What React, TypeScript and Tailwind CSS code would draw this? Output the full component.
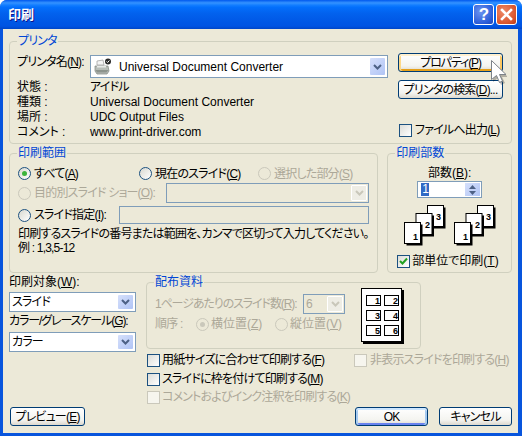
import type { ReactNode } from "react";

const ink = "text-[#000000]";
const off = "text-[#ACA899]";

function Group({ title, className, kana, children }: { title: string; className: string; kana?: boolean; children: ReactNode }) {
  return (
    <fieldset className={`rounded-[4px] border border-[#D0D0BF] ${className}`}>
      <legend className={`ml-[7px] px-[1px] h-[14px] leading-[14px] text-[#0046D5] ${kana ? "" : "tracking-normal"}`}>{title}</legend>
      {children}
    </fieldset>
  );
}

function Button({ children, className, tone }: { children: ReactNode; className: string; tone?: "hot" | "default" }) {
  const inner =
    tone === "hot"
      ? "shadow-[inset_0_2px_0_#FFF0CF,inset_2px_0_0_#FDD889,inset_-2px_0_0_#FBC761,inset_0_-2px_0_#E5A01A]"
      : tone === "default"
        ? "shadow-[inset_0_2px_0_#CEE7FF,inset_2px_0_0_#A6CAF0,inset_-2px_0_0_#A6CAF0,inset_0_-2px_0_#6982EE]"
        : "";
  return (
    <div
      className={`flex items-center justify-center rounded-[3px] border border-[#003C74] bg-[linear-gradient(180deg,#FFFFFF_0%,#F4F4F0_70%,#DCD8CE_100%)] text-black ${inner} ${className}`}
    >
      {children}
    </div>
  );
}

function Check({ on, disabled }: { on?: boolean; disabled?: boolean }) {
  return (
    <span
      className={`flex h-[13px] w-[13px] shrink-0 items-center justify-center border ${
        disabled
          ? "border-[#CAC8BB] bg-[#F6F5EE]"
          : "border-[#1C5180] bg-[linear-gradient(135deg,#DCDCD7_0%,#FFFFFF_100%)]"
      }`}
    >
      {on && (
        <svg width="9" height="9" viewBox="0 0 9 9">
          <path d="M1 4l2.500 2.500L8 1.500" fill="none" stroke="#21A121" strokeWidth="2" />
        </svg>
      )}
    </span>
  );
}

function Radio({ on, disabled }: { on?: boolean; disabled?: boolean }) {
  return (
    <span
      className={`flex h-[13px] w-[13px] shrink-0 items-center justify-center rounded-full border ${
        disabled
          ? "border-[#CAC8BB] bg-[#ECE9D8]"
          : "border-[#1C5180] bg-[linear-gradient(135deg,#D8D8D0_0%,#FFFFFF_100%)]"
      }`}
    >
      {on && <span className={`h-[5px] w-[5px] rounded-full ${disabled ? "bg-[#CAC8BB]" : "bg-[#3CB43C]"}`} />}
    </span>
  );
}

function Arrow({ disabled }: { disabled?: boolean }) {
  return (
    <span
      className={`flex items-center justify-center self-stretch rounded-[1px] ${
        disabled
          ? "m-[1px] w-[16px] border border-[#FFFFFF] bg-[#EEEDE5]"
          : "m-[2px] w-[15px] bg-[linear-gradient(135deg,#D6E0FB_0%,#B0C4F5_100%)]"
      }`}
    >
      <svg width="9" height="6" viewBox="0 0 9 6">
        <path d="M1 1l3.500 3.500L8 1" fill="none" stroke={disabled ? "#C9C7BA" : "#4D6185"} strokeWidth="2" />
      </svg>
    </span>
  );
}

function Combo({ children, className, disabled }: { children?: ReactNode; className: string; disabled?: boolean }) {
  return (
    <div className={`flex items-stretch border border-[#7F9DB9] ${disabled ? "bg-[#ECE9D8]" : "bg-white"} ${className}`}>
      <div className="flex min-w-0 flex-1 items-center pl-[2px]">{children}</div>
      <Arrow disabled={disabled} />
    </div>
  );
}

function PrinterIcon() {
  return (
    <svg width="17" height="18" viewBox="0 0 17 18" className="shrink-0">
      <path d="M3 3l6-1 1 5H3z" fill="#F4F4F4" stroke="#9A9A9A" strokeWidth="0.7" />
      <path d="M1 8h13l1 5-2 3H3l-2-3z" fill="#B8BDB8" stroke="#7E857E" strokeWidth="0.7" />
      <path d="M1.500 12h13l-2 2.500h-9.500z" fill="#8D948D" />
      <path d="M3 8h9v1.500H3z" fill="#E8EAE8" />
      <circle cx="14" cy="3.500" r="3" fill="#2B2B2B" />
      <path d="M12.600 3.500l1 1 1.800-2" fill="none" stroke="#FFFFFF" strokeWidth="1" />
    </svg>
  );
}

function PageStack() {
  const pages = [
    { x: 23.5, y: 0.5, n: "3", tx: 32, ty: 15 },
    { x: 12, y: 8.5, n: "2", tx: 21, ty: 23 },
    { x: 0.5, y: 17.5, n: "1", tx: 9, ty: 35 },
  ];
  return (
    <svg width="42" height="41" viewBox="0 0 42 41" className="shrink-0">
      {pages.map((p) => (
        <g key={p.n}>
          <rect x={p.x + 2} y={p.y + 2} width="16" height="21" fill="#000" />
          <rect x={p.x} y={p.y} width="16" height="21" fill="#fff" stroke="#000" />
          <text x={p.tx} y={p.ty} fontSize="9" fontWeight="700" fontFamily="Liberation Sans" letterSpacing="0" fill="#000">
            {p.n}
          </text>
        </g>
      ))}
    </svg>
  );
}

function HandoutIcon() {
  const cells = [
    [5.5, 7.5, "1"],
    [23.5, 7.5, "2"],
    [5.5, 22.5, "3"],
    [23.5, 22.5, "4"],
    [5.5, 37.5, "5"],
    [23.5, 37.5, "6"],
  ] as const;
  return (
    <svg width="44" height="57" viewBox="0 0 44 57" className="shrink-0">
      <rect x="2" y="2" width="41" height="54" fill="#000" />
      <rect x="0.5" y="0.5" width="40" height="53" fill="#fff" stroke="#000" />
      {cells.map(([x, y, n]) => (
        <g key={n}>
          <rect x={x} y={y} width="14" height="10" fill="#fff" stroke="#000" />
          <text x={x + 8.5} y={y + 8.5} fontSize="9" fontWeight="700" fontFamily="Liberation Sans" letterSpacing="0" fill="#000">
            {n}
          </text>
        </g>
      ))}
    </svg>
  );
}

function InfoRow({ label, value, latin }: { label: string; value: string; latin?: boolean }) {
  return (
    <div className="flex h-[15px] items-center">
      <span className="w-[73px] shrink-0 tracking-normal">{label}</span>
      <span className={latin ? "tracking-normal" : ""}>{value}</span>
    </div>
  );
}

export default function App() {
  return (
    <div className="relative h-[436px] w-[522px] overflow-hidden whitespace-nowrap bg-white font-['Liberation_Sans','Noto_Sans_CJK_JP',sans-serif] text-[12px] leading-[14px] tracking-[-0.8px] text-black [font-feature-settings:'palt']">
      <div className="flex h-full flex-col rounded-t-[7px] bg-[#0855DD]">
        {/* title bar */}
        <div className="flex h-[29px] shrink-0 items-center rounded-t-[7px] bg-[linear-gradient(180deg,#0058EE_0%,#3593FF_10%,#127DFF_18%,#036FFC_25%,#0262EE_45%,#0057E5_77%,#0054E3_90%,#0046C8_100%)] pl-[8px] pr-[5px]">
          <span className="flex-1 text-[13px] font-bold tracking-normal text-white [text-shadow:1px_1px_0_#0F1089]">印刷</span>
          <div className="flex h-[21px] w-[21px] items-center justify-center rounded-[3px] border border-white bg-[radial-gradient(circle_at_35%_35%,#6C94F0_0%,#2A5CD8_70%,#1D45B8_100%)] text-[17px] font-bold text-white">
            ?
          </div>
          <div className="ml-[2px] flex h-[21px] w-[21px] items-center justify-center rounded-[3px] border border-white bg-[radial-gradient(circle_at_35%_35%,#EE8A68_0%,#D9542C_70%,#B83A14_100%)]">
            <svg width="13" height="13" viewBox="0 0 13 13">
              <path d="M2 2l9 9M11 2l-9 9" stroke="#FFFFFF" strokeWidth="2.600" strokeLinecap="square" />
            </svg>
          </div>
        </div>

        {/* client area */}
        <div className="mb-[3px] ml-[3px] mr-[4px] flex flex-1 flex-col bg-[#ECE9D8] pl-[6px] pr-[6px] pt-[5px]">
          <Group title="プリンタ" kana className="h-[110px] w-[503px]">
            <div className="flex">
              <div className="w-[378px] pl-[7px] pt-[7px]">
                <div className="flex h-[23px] items-start">
                  <span className="w-[73px] shrink-0">
                    プリンタ名(<u>N</u>):
                  </span>
                  <Combo className="h-[23px] w-[298px]">
                    <div className="flex items-center gap-[8px] pl-[1px] tracking-normal">
                      <PrinterIcon />
                      <span>Universal Document Converter</span>
                    </div>
                  </Combo>
                </div>
                <div className="mt-[1px]">
                  <InfoRow label="状態 :" value="アイドル" />
                  <InfoRow label="種類 :" value="Universal Document Converter" latin />
                  <InfoRow label="場所 :" value="UDC Output Files" latin />
                  <InfoRow label="コメント :" value="www.print-driver.com" latin />
                </div>
              </div>
              <div className="ml-[10px] w-[106px] pt-[5px]">
                <Button tone="hot" className="h-[19px] w-[105px]">
                  <span className="tracking-[-1.1px]">
                    プロパティ(<u>P</u>)
                  </span>
                </Button>
                <Button className="mt-[8px] h-[19px] w-[105px]">
                  <span>
                    プリンタの検索(<u>D</u>)...
                  </span>
                </Button>
                <div className="ml-[1px] mt-[24px] flex items-center gap-[3px]">
                  <Check />
                  <span>
                    ファイルへ出力(<u>L</u>)
                  </span>
                </div>
              </div>
            </div>
          </Group>

          <div className="mt-[2px] flex gap-[9px]">
            <Group title="印刷範囲" className="h-[127px] w-[370px]">
              <div className="pl-[8px] pt-[7px]">
                <div className="flex h-[13px] items-center">
                  <div className="flex w-[121px] items-center gap-[3px]">
                    <Radio on />
                    <span>
                      すべて(<u>A</u>)
                    </span>
                  </div>
                  <div className="flex w-[119px] items-center gap-[3px]">
                    <Radio />
                    <span>
                      現在のスライド(<u>C</u>)
                    </span>
                  </div>
                  <div className={`flex items-center gap-[3px] ${off}`}>
                    <Radio disabled />
                    <span>
                      選択した部分(<u>S</u>)
                    </span>
                  </div>
                </div>
                <div className="mt-[3px] flex h-[20px] items-center">
                  <div className={`flex w-[148px] items-center gap-[3px] ${off}`}>
                    <Radio disabled />
                    <span>
                      目的別スライド ショー(<u>O</u>):
                    </span>
                  </div>
                  <Combo disabled className="h-[20px] w-[203px]" />
                </div>
                <div className="mt-[3px] flex h-[18px] items-center">
                  <div className="flex w-[101px] items-center gap-[3px]">
                    <Radio />
                    <span>
                      スライド指定(<u>I</u>):
                    </span>
                  </div>
                  <div className="h-[18px] w-[250px] border border-[#7F9DB9] bg-[#ECE9D8]" />
                </div>
                <p className={`mt-[3px] ${ink}`}>印刷するスライドの番号または範囲を、カンマで区切って入力してください。</p>
                <p className={ink}>例 : 1,3,5-12</p>
              </div>
            </Group>

            <Group title="印刷部数" className="h-[127px] w-[125px]">
              <div className="flex flex-col items-center pt-[6px]">
                <span className="tracking-normal">
                  部数(<u>B</u>):
                </span>
                <div className="mt-[1px] flex h-[17px] w-[65px] items-stretch border border-[#7F9DB9] bg-white">
                  <div className="flex flex-1 items-center pl-[3px]">
                    <span className="bg-[#316AC5] px-[1px] leading-[13px] text-white">1</span>
                  </div>
                  <div className="m-[1px] flex w-[15px] flex-col items-center justify-center gap-[2px] bg-[linear-gradient(135deg,#D6E0FB_0%,#B0C4F5_100%)]">
                    <svg width="7" height="4" viewBox="0 0 7 4">
                      <path d="M0 4l3.500-4 3.500 4z" fill="#4D6185" />
                    </svg>
                    <svg width="7" height="4" viewBox="0 0 7 4">
                      <path d="M0 0l3.500 4 3.500-4z" fill="#4D6185" />
                    </svg>
                  </div>
                </div>
                <div className="mt-[7px] flex gap-[8px] pl-[1px]">
                  <PageStack />
                  <PageStack />
                </div>
                <div className="mt-[8px] flex w-full items-center gap-[2px] pl-[9px] tracking-normal">
                  <Check on />
                  <span>
                    部単位で印刷(<u>T</u>)
                  </span>
                </div>
              </div>
            </Group>
          </div>

          <div className="mt-[2px] flex">
            <div className="w-[128px] shrink-0">
              <span className="block tracking-normal">
                印刷対象(<u>W</u>):
              </span>
              <Combo className="mt-[3px] h-[20px] w-[127px]">スライド</Combo>
              <div className="mt-[2px] tracking-[-1.1px]">
                カラー/グレースケール(<u>G</u>):
              </div>
              <Combo className="mt-[4px] h-[20px] w-[127px]">カラー</Combo>
            </div>

            <div className="ml-[9px] flex-1">
              <Group title="配布資料" className={`h-[74px] w-[275px] ${off}`}>
                <div className="flex pl-[8px]">
                  <div className="w-[206px] pt-[5px]">
                    <div className="flex h-[20px] items-center">
                      <span className="w-[148px] shrink-0 tracking-[-1.1px]">
                        1ページあたりのスライド数(<u>R</u>):
                      </span>
                      <Combo disabled className="h-[20px] w-[42px]">
                        6
                      </Combo>
                    </div>
                    <div className="mt-[3px] flex h-[14px] items-center">
                      <span className="w-[41px]">順序 :</span>
                      <div className="flex w-[79px] items-center gap-[2px] tracking-normal">
                        <Radio on disabled />
                        <span>
                          横位置(<u>Z</u>)
                        </span>
                      </div>
                      <div className="flex items-center gap-[2px] tracking-normal">
                        <Radio disabled />
                        <span>
                          縦位置(<u>V</u>)
                        </span>
                      </div>
                    </div>
                  </div>
                  <div className="-mt-[1px]">
                    <HandoutIcon />
                  </div>
                </div>
              </Group>
              <div className="ml-[1px] mt-[4px] flex h-[14px] items-center">
                <div className="flex w-[207px] items-center gap-[2px]">
                  <Check />
                  <span>
                    用紙サイズに合わせて印刷する(<u>F</u>)
                  </span>
                </div>
                <div className={`flex items-center gap-[3px] ${off}`}>
                  <Check disabled />
                  <span>
                    非表示スライドを印刷する(<u>H</u>)
                  </span>
                </div>
              </div>
              <div className="ml-[1px] mt-[5px] flex h-[14px] items-center gap-[2px]">
                <Check />
                <span>
                  スライドに枠を付けて印刷する(<u>M</u>)
                </span>
              </div>
              <div className={`ml-[1px] mt-[4px] flex h-[14px] items-center gap-[2px] ${off}`}>
                <Check disabled />
                <span>
                  コメントおよびインク注釈を印刷する(<u>K</u>)
                </span>
              </div>
            </div>
          </div>

          <div className="mt-[3px] flex items-center pl-[1px]">
            <Button className="h-[19px] w-[75px]">
              <span>
                プレビュー(<u>E</u>)
              </span>
            </Button>
            <Button tone="default" className="ml-auto h-[19px] w-[73px]">
              OK
            </Button>
            <Button className="ml-[11px] h-[19px] w-[73px]">キャンセル</Button>
          </div>
        </div>
      </div>

      {/* mouse pointer over the properties button */}
      <svg width="17" height="28" viewBox="0 0 17 28" className="absolute left-[490px] top-[59px]">
        <path d="M3 4v19l5-4 3 7 4-2-3-6h6z" fill="#000" opacity="0.25" />
        <path d="M1.500 1.500v19l5-4 3 7 3-1.500-3-6.500h6.500z" fill="#FFFFFF" stroke="#7C8288" strokeWidth="1" />
      </svg>
    </div>
  );
}
